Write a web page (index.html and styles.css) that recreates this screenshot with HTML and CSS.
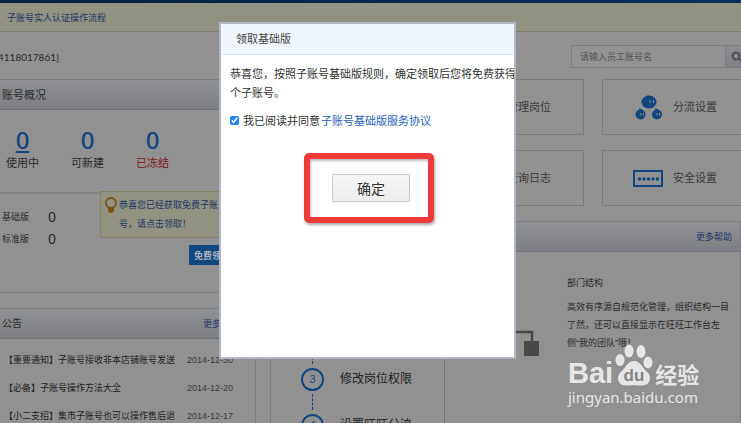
FILE: index.html
```html
<!DOCTYPE html>
<html lang="zh-CN">
<head>
<meta charset="utf-8">
<meta name="viewport" content="width=device-width, initial-scale=1">
<title>子账号管理</title>
<link rel="stylesheet" href="styles.css">
</head>
<body>
<div class="topbar"></div>
<div class="notice"><a href="#">子账号实人认证操作流程</a></div>
<header class="account">
  <span class="account-id">4118017861]</span>
  <form class="search">
    <input type="text" placeholder="请输入员工账号名" aria-label="员工账号名">
    <button type="button" aria-label="搜索">
      <svg width="12" height="12" viewBox="0 0 12 12"><circle cx="5" cy="5" r="3.5"/><path d="M7.7 7.7 11 11"/></svg>
    </button>
  </form>
</header>
<main class="columns">
  <div class="side">
    <section class="panel overview">
      <h2 class="panel-head">账号概况</h2>
      <ul class="stats">
        <li><a class="stat-num current" href="#">0</a><span>使用中</span></li>
        <li><a class="stat-num" href="#">0</a><span>可新建</span></li>
        <li class="frozen"><a class="stat-num" href="#">0</a><span>已冻结</span></li>
      </ul>
      <div class="versions">
        <dl>
          <div><dt>基础版</dt><dd>0</dd></div>
          <div><dt>标准版</dt><dd>0</dd></div>
        </dl>
        <div class="offer">
          <div class="tip">
            <svg width="12" height="17" viewBox="0 0 12 17"><circle cx="6" cy="6" r="5" fill="none" stroke="#7b5310" stroke-width="1.800"/><path d="M3 10h6v3.500L7.500 16h-3L3 13.500z" fill="#7b5310"/></svg>
            <p>恭喜您已经获取免费子账<br>号，请点击领取！</p>
          </div>
          <button class="claim" type="button">免费领取</button>
        </div>
      </div>
    </section>
    <section class="panel news">
      <div class="panel-head"><h2>公告</h2><a href="#">更多公告</a></div>
      <ul class="news-list">
        <li><a href="#">【重要通知】子账号接收非本店铺账号发送</a><time>2014-12-30</time></li>
        <li><a href="#">【必备】子账号操作方法大全</a><time>2014-12-20</time></li>
        <li><a href="#">【小二支招】集市子账号也可以操作售后退</a><time>2014-12-17</time></li>
      </ul>
    </section>
  </div>
  <div class="content">
    <nav class="cards">
      <a class="card" href="#"></a>
      <a class="card" href="#">管理岗位</a>
      <a class="card" href="#">
        <svg width="28" height="26" viewBox="0 0 28 26" fill="#12467f"><path d="M11 0l3 2h4l-3 2z"/><ellipse cx="14" cy="8" rx="7.500" ry="6.500"/><circle cx="5.500" cy="20.500" r="5"/><circle cx="22" cy="20.500" r="5"/><path d="M4 14l3 1.500-2 2zM20 14l3 1.500-2 2z"/><path d="M15 6v3M18.500 6v3M6 19v2.500M8.500 19v2.500M22 19v2.500M24.500 19v2.500" stroke="#919191"/></svg>
        分流设置</a>
      <a class="card" href="#"></a>
      <a class="card" href="#">查询日志</a>
      <a class="card" href="#">
        <svg width="30" height="17" viewBox="0 0 30 17"><rect x="1" y="1" width="28" height="15" fill="none" stroke="#12467f" stroke-width="2"/><g fill="#12467f"><circle cx="6.500" cy="9" r="1.700"/><circle cx="11" cy="9" r="1.700"/><circle cx="15.500" cy="9" r="1.700"/><circle cx="20" cy="9" r="1.700"/><circle cx="24.500" cy="9" r="1.700"/></g></svg>
        安全设置</a>
    </nav>
    <section class="panel help">
      <div class="panel-head"><a href="#">更多帮助</a></div>
      <div class="help-body">
        <ol class="steps">
          <li><b>1</b>新建员工账号</li>
          <li><b>2</b>设置部门结构</li>
          <li><b>3</b>修改岗位权限</li>
          <li><b>4</b>设置旺旺分流</li>
        </ol>
        <svg class="tree" width="94" height="26" viewBox="0 0 94 26"><path d="M0 2h87v10" fill="none" stroke="#484848" stroke-width="2.500"/><path d="M79 11h15v15H79z" fill="#484848"/></svg>
        <div class="help-text">
          <h3>部门结构</h3>
          <p>高效有序源自规范化管理，组织结构一目<br>了然，还可以直接显示在旺旺工作台左<br>侧“我的团队”哦！</p>
        </div>
      </div>
    </section>
  </div>
</main>
<div class="dialog" role="dialog" aria-labelledby="dialog-title">
  <h2 id="dialog-title">领取基础版</h2>
  <div class="dialog-body">
    <p>恭喜您，按照子账号基础版规则，确定领取后您将免费获得3<br>个子账号。</p>
    <div class="agree">
      <input id="agree" type="checkbox" checked>
      <label for="agree">我已阅读并同意</label>
      <a href="#">子账号基础版服务协议</a>
    </div>
    <div class="highlight"><button type="button">确定</button></div>
  </div>
</div>
<div class="watermark">
  <div class="brand">
    <span class="latin">Bai</span>
    <svg width="38" height="42" viewBox="0 0 38 42" fill="#e6e6e6"><ellipse cx="5" cy="16" rx="4.500" ry="6"/><ellipse cx="14" cy="7" rx="4.500" ry="6.500"/><ellipse cx="26" cy="7.500" rx="4.500" ry="6.500"/><ellipse cx="33" cy="18.500" rx="4.500" ry="6"/><path d="M19 17c6 0 8 6 12 10 4 3 5 7 3 11-2 4-7 4-15 3-8 1-13 1-15-3-2-4-1-8 3-11 4-4 6-10 12-10z"/><text x="19" y="37" text-anchor="middle">du</text></svg>
    <span class="cjk">经验</span>
  </div>
  <div class="site">jingyan.baidu.com</div>
</div>
</body>
</html>
```
FILE: styles.css
```css
* { box-sizing: border-box; }

html { height: 100%; overflow: hidden; }

body {
  margin: 0;
  height: 100vh;
  position: relative;
  overflow: hidden;
  background: #919191;
  color: #2b2b2b;
  font: 9px/18px "Liberation Sans", "Noto Sans CJK SC", sans-serif;
}

h2, h3, p, ul, ol, dl, dd { margin: 0; padding: 0; font-size: inherit; font-weight: 400; }
ul, ol { list-style: none; }
a { color: #1e3567; text-decoration: none; }
button, input { font-family: inherit; }

.topbar { height: 3px; background: linear-gradient(90deg, #06203f, #0a2c58); }

.notice {
  height: 29px;
  padding: 6px 7px;
  background: #929282;
  border-bottom: 1px solid #7f7f78;
}

.account {
  height: 47px;
  display: flex;
  justify-content: space-between;
  align-items: center;
  padding-top: 2px;
}
.account-id { margin-left: -2px; font: 10px/18px Lato, sans-serif; }

.search { display: flex; height: 23px; width: 177px; flex: none; margin-right: -7px; }
.search input {
  flex: 1;
  min-width: 0;
  padding: 0 8px;
  border: 1px solid #7b7b7b;
  background: #929292;
  font-size: 9px;
}
.search input::placeholder { color: #555; opacity: 1; }
.search button {
  width: 22px;
  padding: 0 5px;
  border: 1px solid #7b7b7b;
  border-left: 0;
  background: linear-gradient(#8c8e92, #7f8186);
}
.search svg { display: block; fill: none; stroke: #505050; stroke-width: 2; }

.columns { display: grid; grid-template-columns: 256px minmax(0, 1fr); gap: 14px; }
.side { display: grid; gap: 15px; align-content: start; }

.panel { border: 1px solid #7d7d7f; border-left: 0; }
.panel-head {
  height: 30px;
  display: flex;
  justify-content: space-between;
  align-items: center;
  padding: 0 8px 0 2px;
  border-bottom: 1px solid #737477;
  background: linear-gradient(#909193, #7d7f84);
}
h2.panel-head { font-size: 11px; }
.panel-head h2 { font-size: 10px; }
.panel-head a { margin-left: auto; }
.news .panel-head { padding-right: 16px; }

.stats { height: 84px; display: flex; padding-top: 16px; border-bottom: 2px solid #838383; }
.stats li { width: 65px; padding-left: 6px; font-size: 11px; }
.stats li > * { display: block; width: 33px; text-align: center; }
.stat-num { height: 28px; color: #12467f; font: 500 24px/28px "Noto Sans", sans-serif; }
.current { text-decoration: underline; text-decoration-thickness: 2px; text-underline-offset: 2px; }
.frozen { color: #831717; }

.versions { height: 98px; display: flex; }
.versions dl { width: 100px; flex: none; padding: 12px 0 0 2px; }
.versions dl div { display: flex; height: 22px; align-items: center; }
.versions dt { width: 46px; }
.versions dd { font: 14px/22px "Noto Sans", sans-serif; }
.offer { flex: 1; min-width: 0; margin-top: -3px; }
.tip {
  display: flex;
  gap: 2px;
  height: 47px;
  padding: 4px;
  border: 1px solid #84806a;
  background: #929282;
  color: #1e3567;
  white-space: nowrap;
}
.tip p { line-height: 19px; }
.tip svg { flex: none; margin-top: 1px; }
.claim {
  display: block;
  margin: 7px 0 0 89px;
  width: 60px;
  height: 20px;
  padding: 0 5px;
  border: 0;
  border-radius: 1px;
  background: #12467f;
  color: #a9b3c0;
  font-size: 9px;
  font-weight: 700;
  text-align: left;
  white-space: nowrap;
}

.news-list { padding: 7px 22px 0 4px; }
.news-list li { display: flex; justify-content: space-between; height: 28px; line-height: 28px; white-space: nowrap; }
.news-list a { color: #222; }
.news-list time { color: #3a3a3a; }

.content { overflow: hidden; }
.cards { display: grid; grid-template-columns: repeat(3, 148px); gap: 15px 18px; }
.card {
  height: 56px;
  display: flex;
  align-items: center;
  justify-content: flex-end;
  gap: 10px;
  padding-right: 32px;
  border: 1px solid #7b7b7b;
  color: #3a3a3a;
  font-size: 11px;
}

.help { margin-top: 15px; border-left: 1px solid #7d7d7f; }
.help-body { display: flex; }
.steps { width: 174px; flex: none; padding: 12px 0 0 30px; border-right: 1px solid #777; color: #222; font-size: 12px; }
.steps li { position: relative; display: flex; align-items: center; gap: 16px; height: 46px; }
.steps b {
  width: 23px;
  height: 23px;
  border: 2px solid #12467f;
  border-radius: 50%;
  color: #12467f;
  font: 11px/19px "Liberation Sans", sans-serif;
  text-align: center;
}
.steps li::before {
  content: "";
  position: absolute;
  left: 11px;
  top: -8px;
  height: 16px;
  border-left: 1px dashed #12467f;
}
.tree { flex: none; margin-top: 78px; }
.help-text { padding: 22px 0 0 28px; white-space: nowrap; }
.help-text p { margin-top: 6px; }

.dialog {
  position: absolute;
  left: 219px;
  top: 22px;
  width: 297px;
  height: 337px;
  overflow: hidden;
  border: 2px solid #b2b7c8;
  background: #fff;
  color: #333;
  font-size: 11px;
  white-space: nowrap;
}
.dialog h2 {
  height: 31px;
  padding-left: 15px;
  border-bottom: 1px solid #dde5ec;
  background: #eff6fe;
  color: #444;
  line-height: 30px;
}
.dialog-body { padding: 10px 9px; }
.dialog-body p { line-height: 19px; }
.agree { display: flex; align-items: center; height: 19px; margin-top: 8px; }
.agree input { width: 9px; height: 9px; margin: 0 4px 0 0; accent-color: #2385f5; }
.agree a { margin-left: 1px; color: #2a62bc; }
.highlight {
  display: flex;
  align-items: center;
  justify-content: center;
  width: 130px;
  height: 70px;
  margin: 23px 0 0 74px;
  padding-left: 4px;
  border: 6px solid #ee3a36;
  border-radius: 5px;
  box-shadow: 1px 2px 3px #aaa, inset 1px 2px 3px #bbb;
}
.highlight button {
  width: 78px;
  height: 28px;
  padding: 0;
  border: 1px solid #c9c9c9;
  border-radius: 1px;
  background: linear-gradient(#f7f7f7, #ececec);
  color: #333;
  font-size: 14px;
}

.watermark { position: absolute; right: 40px; bottom: 15px; width: 133px; color: #e6e6e6; }
.brand { display: flex; align-items: flex-end; height: 42px; white-space: nowrap; }
.brand svg { flex: none; margin: 0 2px; }
.brand text { fill: #858585; font: 700 17px "Liberation Sans", sans-serif; }
.latin { font: 700 29px/26px "Liberation Sans", sans-serif; }
.cjk { font: 700 22px/26px "Noto Sans CJK SC", sans-serif; }
.site { font: 15px/22px "Noto Sans", sans-serif; }
```
